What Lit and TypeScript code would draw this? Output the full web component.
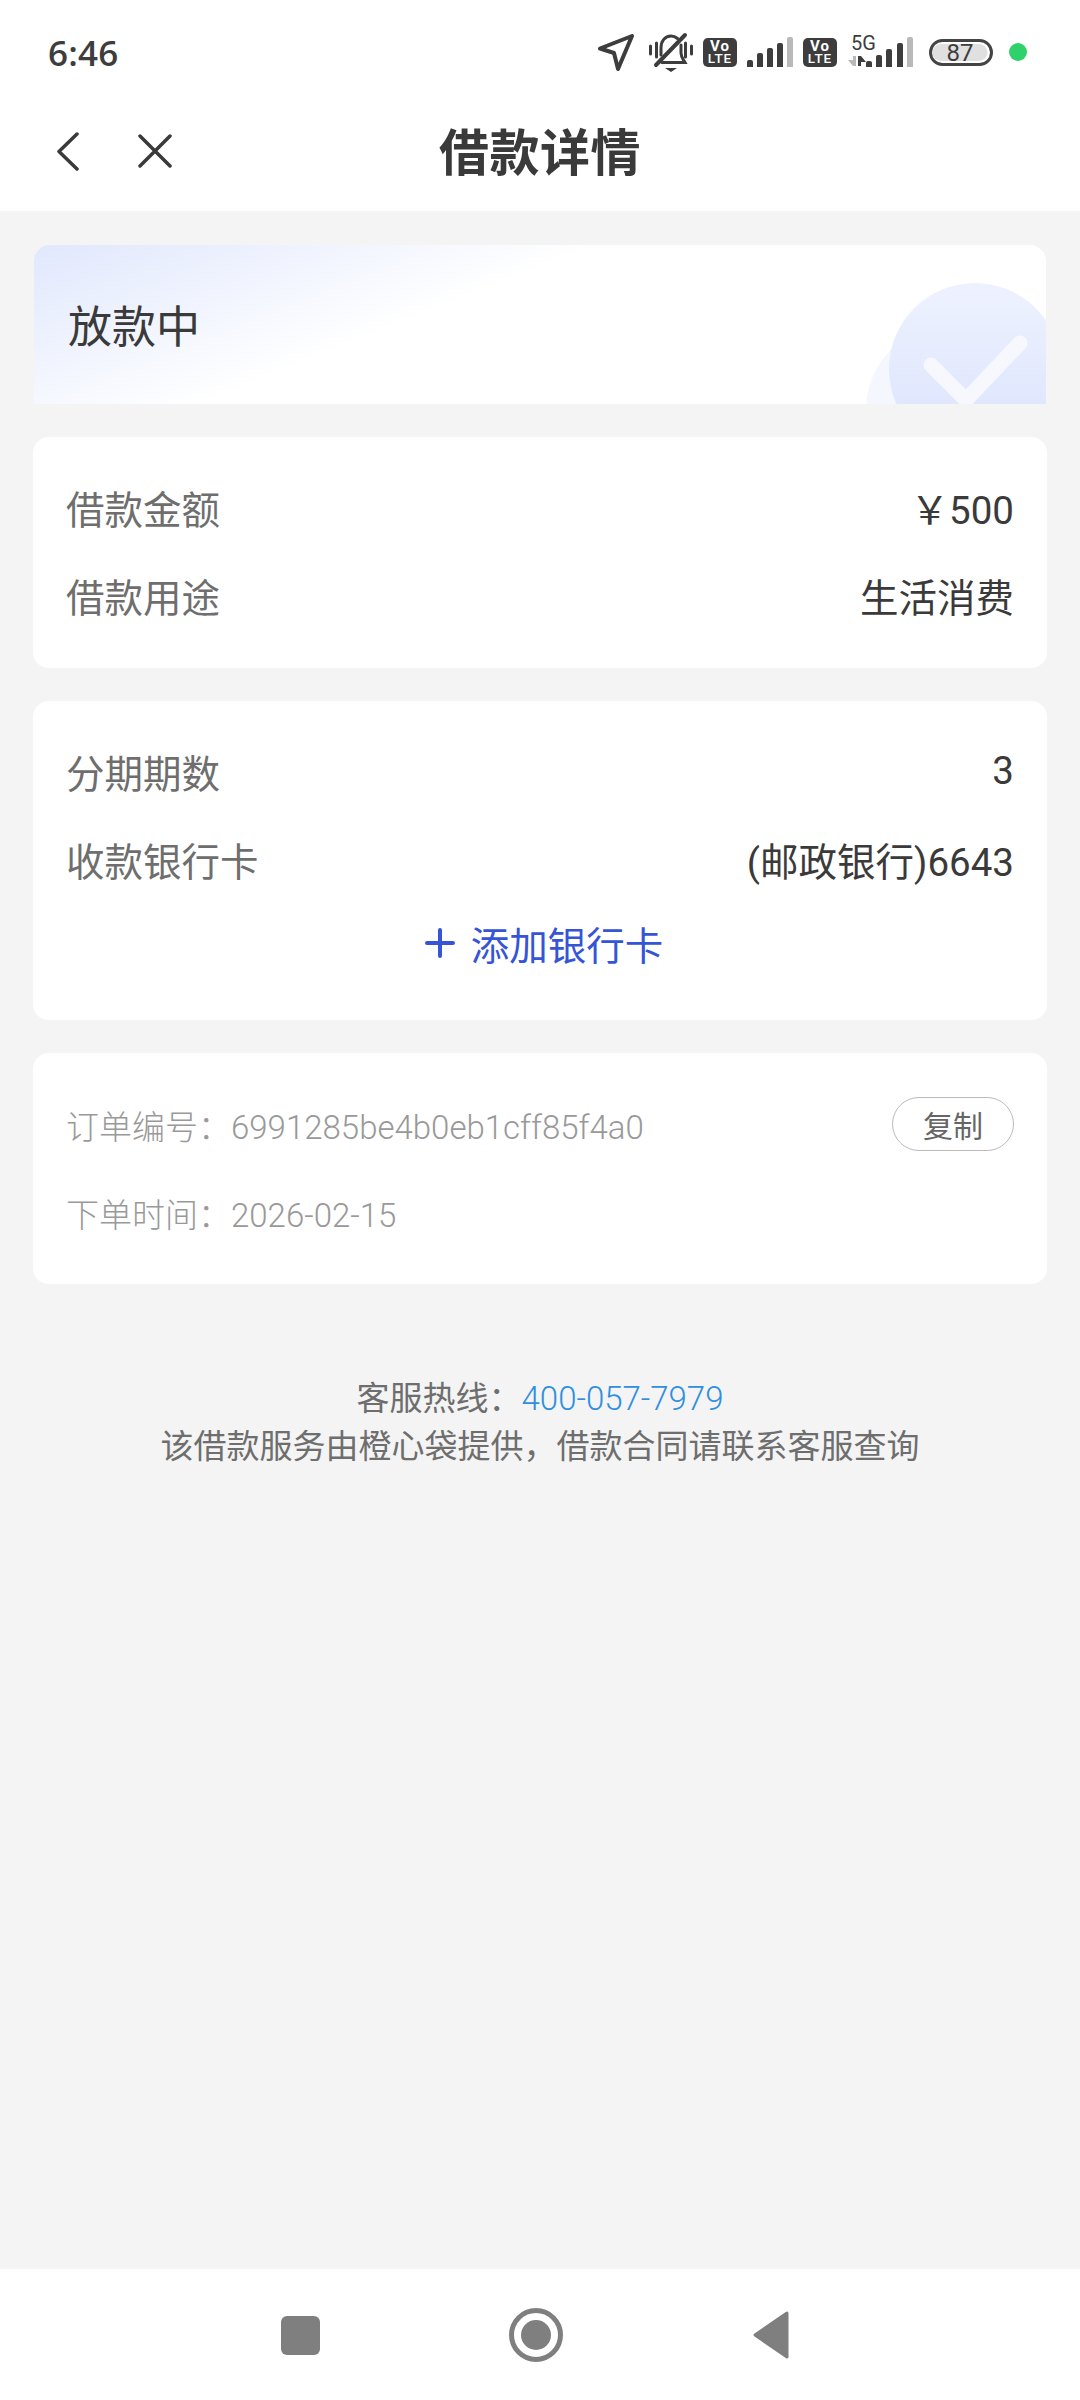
import { html, css, LitElement, svg } from 'lit';
import { customElement } from 'lit/decorators.js';

const volte = html`<svg class="volte" width="34" height="29" viewBox="0 0 34 29">
	<rect width="34" height="29" rx="5" fill="#3d3d3d"/>
	<text x="17" y="13" text-anchor="middle" font-size="15" font-weight="700" letter-spacing="1" fill="#fff" font-family="Roboto, sans-serif">Vo</text>
	<text x="17" y="25" text-anchor="middle" font-size="13.5" font-weight="500" letter-spacing="1" fill="#fff" font-family="Roboto, sans-serif">LTE</text>
</svg>`;

const bars = (xs: number[], tops: number[]) => xs.map((x, i) => svg`<path
	d="M${x} ${tops[i] + 2}q0-2 2-2h2q2 0 2 2V30H${x}z"
	fill="${i === xs.length - 1 ? '#b9b9b9' : '#3d3d3d'}"/>`);

@customElement('app-root')
export class AppRoot extends LitElement {
	static styles = css`:host {
		display: flex;
		flex-direction: column;
		min-height: 100vh;
		background-color: #f4f4f4;
		font-family: Roboto, "Noto Sans CJK SC", sans-serif;
		color: #3a3a3a;
	}

	.top {
		background-color: #fff;
	}

	.status {
		height: 104px;
		padding: 0 53px 0 48px;
		box-sizing: border-box;
		display: flex;
		align-items: center;
		font-family: "Open Sans", sans-serif;
		font-size: 35px;
		font-weight: 550;
		color: #3d3d3d;
	}

	.time {
		margin-right: auto;
		letter-spacing: 0.2px;
	}

	.status svg {
		display: block;
		flex: none;
		font-weight: 400;
	}

	.status .volte {
		margin-left: 10px;
	}

	.status .signal {
		margin-left: 10px;
	}

	.status .bell {
		margin-left: 15px;
	}

	.status .battery {
		margin-left: 16px;
	}

	.dot {
		width: 18px;
		height: 18px;
		margin-left: 16px;
		border-radius: 50%;
		background-color: #2fd16a;
	}

	.nav {
		height: 107px;
		box-sizing: border-box;
		padding-bottom: 8px;
		position: relative;
		display: flex;
		align-items: center;
		justify-content: center;
		font-size: 50px;
		font-weight: 700;
		letter-spacing: 0.5px;
		line-height: 96px;
	}

	.nav-icons {
		position: absolute;
		left: 55px;
		top: 28px;
		display: flex;
		gap: 58px;
	}

	.nav-icons svg:last-child {
		margin-top: 2px;
	}

	main {
		flex: 1;
		padding: 34px 33px 0;
		display: flex;
		flex-direction: column;
		gap: 33px;
	}

	.card {
		background-color: #fff;
		border-radius: 16px;
	}

	.state {
		height: 159px;
		margin: 0 1px;
		border-radius: 16px 16px 0 0;
		padding-left: 34px;
		position: relative;
		overflow: hidden;
		display: flex;
		align-items: center;
		font-size: 44px;
		background-image: linear-gradient(158deg, #e1e8fd 0%, #eef2fe 18%, #fff 40%);
	}

	.state span {
		margin-top: -2px;
	}

	.state svg {
		position: absolute;
		right: 0;
		bottom: 0;
	}

	.info {
		padding: 28px 33px 27px;
	}

	.row {
		height: 88px;
		box-sizing: border-box;
		padding-bottom: 5px;
		display: flex;
		align-items: center;
		justify-content: space-between;
		font-size: 38.5px;
	}

	.label {
		color: #6e6e6e;
	}

	.bank {
		padding-bottom: 33px;
	}

	.add {
		height: 82px;
		box-sizing: border-box;
		padding-bottom: 6px;
		display: flex;
		align-items: center;
		justify-content: center;
		gap: 16px;
		font-size: 38.5px;
		color: #3555d6;
		margin-left: 8px;
	}

	.order {
		padding: 28px 33px 27px;
	}

	.order-row {
		height: 88px;
		display: flex;
		align-items: center;
		justify-content: space-between;
		font-size: 33px;
		font-weight: 300;
		color: #999;
	}

	.copy {
		width: 122px;
		height: 54px;
		box-sizing: border-box;
		border: 1px solid #bbb;
		border-radius: 27px;
		display: flex;
		align-items: center;
		justify-content: center;
		font-size: 30px;
		font-weight: 400;
		color: #666;
		margin-top: -2px;
	}

	.footer {
		margin-top: 58px;
		text-align: center;
		font-size: 33px;
		line-height: 48px;
		color: #6e6e6e;
	}

	.footer a {
		color: #2f8fe0;
		font-weight: 300;
		text-decoration: none;
	}

	.bottom {
		height: 131px;
		box-sizing: border-box;
		padding-right: 12px;
		background-color: #fff;
		flex: none;
		display: flex;
		align-items: center;
		justify-content: center;
	}

	.bottom svg {
		display: block;
	}
	`;

	render() {
		return html`<div class="top">
			<div class="status">
				<span class="time">6:46</span>
				<svg width="36" height="37" viewBox="0 0 36 37" fill="none" stroke="#3d3d3d" stroke-width="4" stroke-linejoin="round" stroke-linecap="round">
					<path d="M2 14.5 34 2 20 35 16 19z"/>
				</svg>
				<svg class="bell" width="44" height="40" viewBox="0 0 44 40" fill="none" stroke="#3d3d3d" stroke-width="3" stroke-linecap="round">
					<path d="M1.5 14v8M7.5 11v14M36.5 11v14M42.5 14v8"/>
					<path d="M12 23V16C12 9 16 4 22 4c2.500 0 4.500 .8 6.500 2.500"/>
					<path d="M32 13v8c0 4 2 6 4 9.500H13"/>
					<path d="M7 33 36 3" stroke-width="4"/>
					<path d="M16 36h12l-6 4z" fill="#3d3d3d" stroke="none"/>
				</svg>
				${volte}
				<svg class="signal" width="46" height="30" viewBox="0 0 46 30">
					${bars([0, 10, 20, 30, 40], [23, 16, 11, 6, 0])}
				</svg>
				${volte}
				<svg class="signal" width="66" height="40" viewBox="0 0 66 40">
					<text x="4" y="18" font-size="20" fill="#3d3d3d" font-family="Roboto, sans-serif">5G</text>
					<path d="M6 24h3V34H6zM1 28H6V34z" fill="#b9b9b9"/>
					<path d="M11 24h3V34H11zM14 24 19 30H14z" fill="#3d3d3d"/>
					<g transform="translate(19 5)">
						${bars([0, 10, 20, 31, 41], [24, 18, 12, 6, 0])}
					</g>
				</svg>
				<svg class="battery" width="64" height="27" viewBox="0 0 64 27">
					<rect x="1.500" y="1.500" width="61" height="24" rx="12" fill="#fff" stroke="#444" stroke-width="3"/>
					<path d="M12 5h38a8.500 8.500 0 0 1 0 17H12a8.500 8.500 0 0 1 0-17z" fill="#e0e0e0"/>
					<text x="31" y="22" text-anchor="middle" font-size="24" fill="#3d3d3d" font-family="Roboto, sans-serif">87</text>
				</svg>
				<span class="dot"></span>
			</div>
			<div class="nav">
				<div class="nav-icons">
					<svg width="25" height="39" viewBox="0 0 25 39" fill="none" stroke="#3a3a3a" stroke-width="3.500" stroke-linecap="round" stroke-linejoin="round">
						<path d="M22 2 4 19.500 22 37"/>
					</svg>
					<svg width="34" height="34" viewBox="0 0 34 34" fill="none" stroke="#3a3a3a" stroke-width="3.500" stroke-linecap="round">
						<path d="M2 2 32 32M32 2 2 32"/>
					</svg>
				</div>
				<span>借款详情</span>
			</div>
		</div>

		<main>
			<div class="card state">
				<span>放款中</span>
				<svg width="190" height="125" viewBox="0 0 190 125">
					<defs>
						<linearGradient id="disc" x1="0" y1="0" x2="0" y2="1">
							<stop offset="0" stop-color="#eef2ff"/>
							<stop offset="1" stop-color="#dbe2fc"/>
						</linearGradient>
					</defs>
					<circle cx="96" cy="131" r="86" fill="#f5f7fe"/>
					<circle cx="119" cy="90" r="86" fill="url(#disc)"/>
					<path d="M75 86 110 121 164 64" fill="none" stroke="#f6f8fe" stroke-width="15" stroke-linecap="round" stroke-linejoin="round"/>
				</svg>
			</div>

			<div class="card info">
				<div class="row"><span class="label">借款金额</span><span>￥500</span></div>
				<div class="row"><span class="label">借款用途</span><span>生活消费</span></div>
			</div>

			<div class="card info bank">
				<div class="row"><span class="label">分期期数</span><span>3</span></div>
				<div class="row"><span class="label">收款银行卡</span><span>(邮政银行)6643</span></div>
				<div class="add">
					<svg width="30" height="30" viewBox="0 0 30 30" fill="none" stroke="#3555d6" stroke-width="4" stroke-linecap="round">
						<path d="M15 2V28M2 15H28"/>
					</svg>
					<span>添加银行卡</span>
				</div>
			</div>

			<div class="card order">
				<div class="order-row"><span>订单编号：6991285be4b0eb1cff85f4a0</span><span class="copy">复制</span></div>
				<div class="order-row"><span>下单时间：2026-02-15</span></div>
			</div>

			<div class="footer">
				<div>客服热线：<a>400-057-7979</a></div>
				<div>该借款服务由橙心袋提供，借款合同请联系客服查询</div>
			</div>
		</main>

		<div class="bottom">
			<svg width="510" height="54" viewBox="0 0 510 54">
				<rect x="2" y="8" width="39" height="39" rx="6" fill="#7f7f7f"/>
				<circle cx="257" cy="27" r="24.500" fill="none" stroke="#7f7f7f" stroke-width="5"/>
				<circle cx="257" cy="27" r="15" fill="#7f7f7f"/>
				<path d="M508 5V49L476 27z" fill="#7f7f7f" stroke="#7f7f7f" stroke-width="3" stroke-linejoin="round"/>
			</svg>
		</div>`;
	}
}

declare global {
	interface HTMLElementTagNameMap {
		"app-root": AppRoot,
	}
}
